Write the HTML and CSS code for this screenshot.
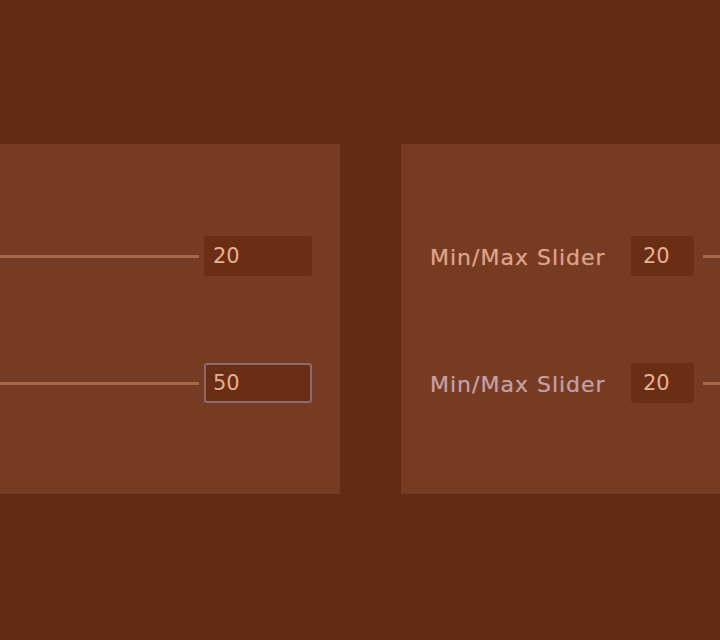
FILE: index.html
```html
<!DOCTYPE html>
<html lang="en">

<head>
    <meta charset="UTF-8">
    <meta name="viewport" content="width=device-width, initial-scale=1.0">
    <title>Sliders</title>
    <link rel="stylesheet" href="styles.css">
</head>

<body>

    <div class="panels">
        <!-- plain sliders, value box on the right -->
        <div class="panel panel-left">
            <div class="row">
                <div class="track"></div>
                <input class="num num-wide" type="text" value="20">
            </div>
            <div class="row">
                <div class="track"></div>
                <input class="num num-wide focus" type="text" value="50">
            </div>
        </div>

        <!-- min/max sliders with a label in front -->
        <div class="panel panel-right">
            <div class="row">
                <span class="label">Min/Max Slider</span>
                <input class="num" type="text" value="20">
                <div class="track"></div>
            </div>
            <div class="row">
                <span class="label label-muted">Min/Max Slider</span>
                <input class="num" type="text" value="20">
                <div class="track"></div>
            </div>
        </div>
    </div>

</body>

</html>
```

FILE: styles.css
```css
body{
    margin: 0;
    width: 100%;
    height: 100vh;
    overflow: hidden;
    background-color: #622b14;
    font-family: "DejaVu Sans", sans-serif;
}

.panels{
    display: flex;
    gap: 61px;
    padding-top: 144px;
    margin-left: -60px;
}

.panel{
    flex: 0 0 400px;
    background-color: #763b23;
    padding: 92px 0 91px;
    display: flex;
    flex-direction: column;
    gap: 87px;
}

.panel-left{
    padding-right: 28px;
    box-sizing: border-box;
}

.panel-right{
    padding-left: 29px;
    box-sizing: border-box;
}

.row{
    display: flex;
    align-items: center;
    height: 40px;
}

.track{
    flex: 1;
    height: 3px;
    background-color: #a66746;
}

.panel-left .track{
    margin-right: 5px;
}

.panel-right .track{
    margin-left: 9px;
}

.label{
    width: 176px;
    margin-right: 25px;
    padding-top: 3px;
    font-size: 22px;
    letter-spacing: 1px;
    color: #dca385;
    white-space: nowrap;
    text-shadow: 0 0 1px rgba(220, 163, 133, 0.6);
}

.label-muted{
    color: #c79ea2;
    text-shadow: 0 0 1px rgba(199, 158, 162, 0.6);
}

.num{
    box-sizing: border-box;
    width: 63px;
    height: 40px;
    padding: 0 10px;
    border: 2px solid transparent;
    border-radius: 3px;
    background-color: #6a2d15;
    color: #e6b090;
    font-family: "DejaVu Sans", sans-serif;
    font-size: 21px;
    outline: none;
}

.num-wide{
    width: 108px;
    padding-left: 7px;
}

.num.focus{
    border-color: #8e6a6c;
}
```
